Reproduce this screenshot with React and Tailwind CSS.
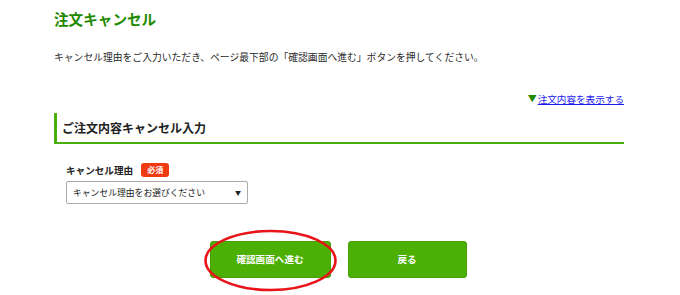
export default function App() {
  return (
    <div
      className="relative w-[680px] h-[295px] bg-white overflow-hidden"
      style={{ fontFamily: '"Noto Sans CJK JP", "Noto Sans", sans-serif' }}
    >
      <div className="ml-[54px] w-[570px] flex flex-col">
        <h1 className="mt-[9px] h-[20px] leading-[20px] text-[14.6px] font-bold text-[#1f8a00]">
          注文キャンセル
        </h1>
        <p className="mt-[21px] h-[14px] leading-[14px] text-[9.8px] text-[#2a2a2a]">
          キャンセル理由をご入力いただき、ページ最下部の「確認画面へ進む」ボタンを押してください。
        </p>
        <div className="mt-[28px] h-[14px] flex justify-end items-center">
          <span className="text-[9px] leading-[14px] text-[#1f8a00] mr-[1px]">▼</span>
          <a href="#" className="text-[9.6px] leading-[14px] text-[#1a1aee] underline">
            注文内容を表示する
          </a>
        </div>
        <div className="mt-[7px] h-[31px] border-l-[3px] border-b-2 border-[#4aaf0a] flex items-center pl-[5px]">
          <h2 className="text-[12px] font-bold text-[#222] leading-[16px]">ご注文内容キャンセル入力</h2>
        </div>
        <div className="ml-[12px] mt-[19px] h-[14px] flex items-center gap-[8px]">
          <span className="text-[9.6px] font-bold text-[#222] leading-[14px]">キャンセル理由</span>
          <span className="h-[14px] px-[6px] rounded-[3px] bg-[#ef3a12] text-white text-[8px] font-bold leading-[14px]">
            必須
          </span>
        </div>
        <div className="ml-[12px] mt-[4px] w-[182px] h-[23px] border border-[#aaa] rounded-[2px] flex items-center justify-between pl-[6px] pr-[6px] bg-white">
          <span className="text-[8.8px] text-[#222] leading-[12px]">キャンセル理由をお選びください</span>
          <span className="text-[6px] text-[#222]">▼</span>
        </div>
        <div className="mt-[37px] flex justify-center gap-[17px] pr-[2px]">
          <button className="w-[121px] h-[37px] rounded-[3px] bg-[#4caf04] border border-[#45a003] text-white text-[9.6px] font-bold">
            確認画面へ進む
          </button>
          <button className="w-[119px] h-[37px] rounded-[3px] bg-[#4caf04] border border-[#45a003] text-white text-[9.6px] font-bold">
            戻る
          </button>
        </div>
      </div>
      <svg className="absolute left-0 top-0 pointer-events-none" width="680" height="295">
        <ellipse cx="270.5" cy="260.5" rx="65" ry="29.5" fill="none" stroke="#e8141a" strokeWidth="2.6" />
      </svg>
    </div>
  );
}
